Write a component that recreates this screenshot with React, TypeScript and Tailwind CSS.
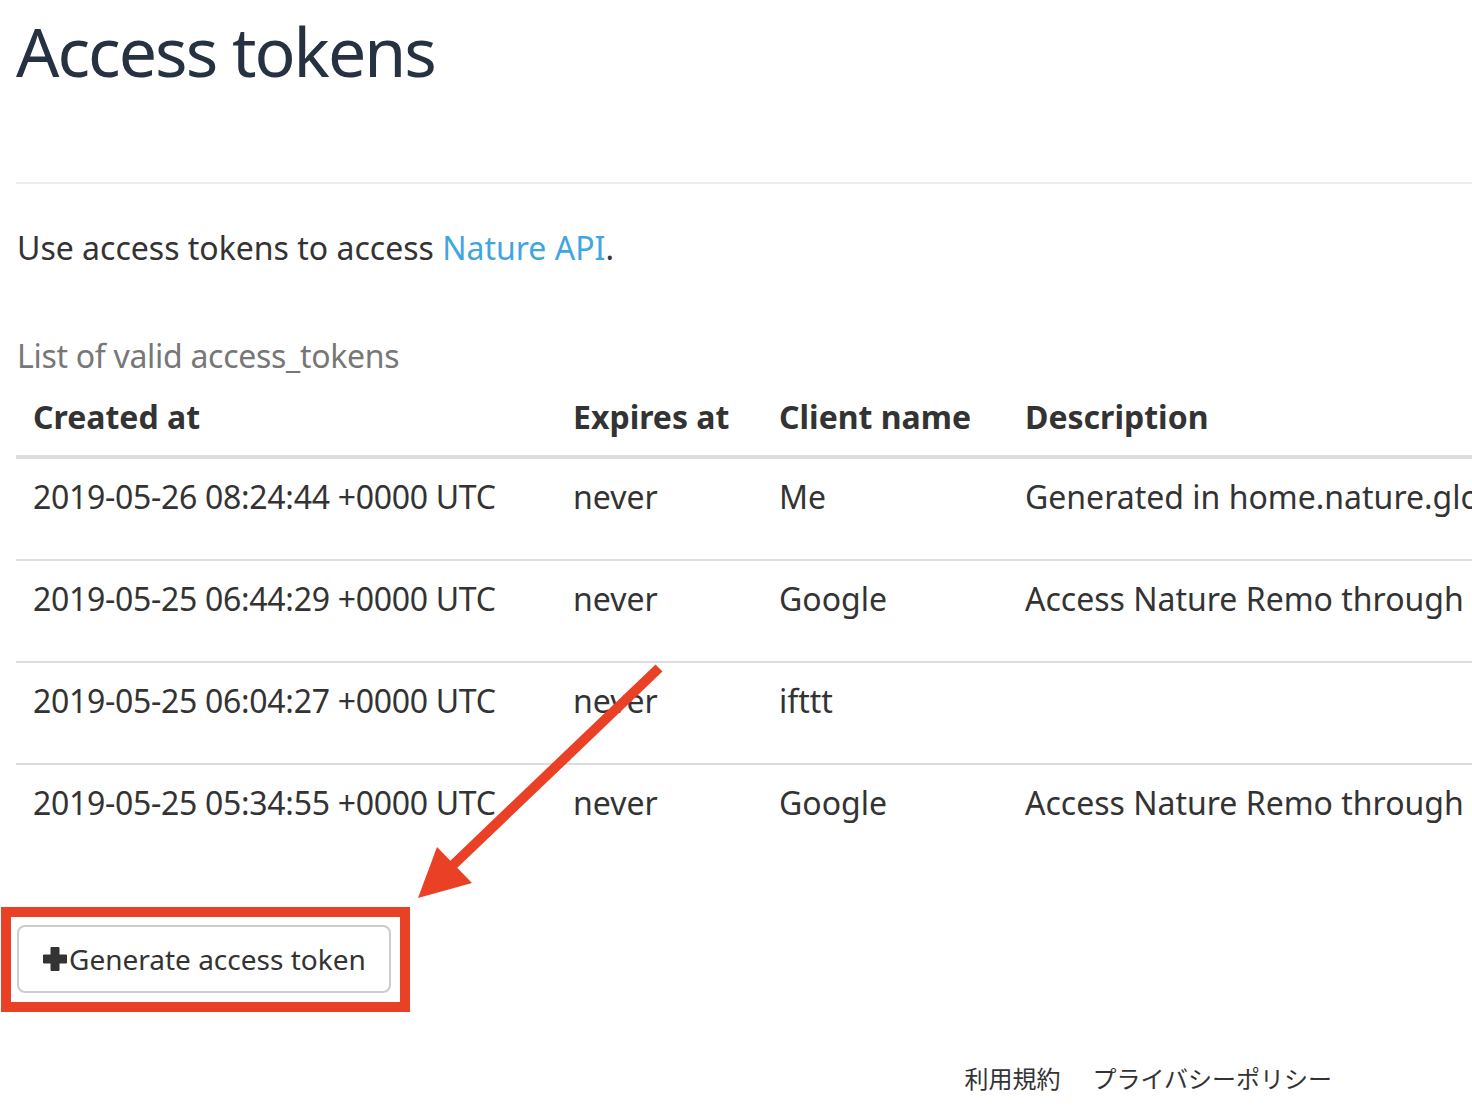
import React from 'react'

const rows = [
    { created: '2019-05-26 08:24:44 +0000 UTC', expires: 'never', client: 'Me', desc: 'Generated in home.nature.global' },
    { created: '2019-05-25 06:44:29 +0000 UTC', expires: 'never', client: 'Google', desc: 'Access Nature Remo through Google Assistant' },
    { created: '2019-05-25 06:04:27 +0000 UTC', expires: 'never', client: 'ifttt', desc: '' },
    { created: '2019-05-25 05:34:55 +0000 UTC', expires: 'never', client: 'Google', desc: 'Access Nature Remo through Google Assistant' },
]

function PlusIcon() {
    return (
        <svg width="26" height="26" viewBox="0 0 26 26" className="shrink-0">
            <path d="M9 1.5h8v7.5h7.5v8H17v7.5H9V17H1.5V9H9z" fill="#333" strokeLinejoin="round" stroke="#333" strokeWidth="1" />
        </svg>
    )
}

export default function App() {
    return (
        <div
            className="relative w-[1472px] h-[1114px] overflow-hidden bg-white text-[#333]"
            style={{ fontFamily: '"Noto Sans", "Open Sans", "Noto Sans CJK JP", sans-serif' }}
        >
            <div className="pl-4">
                <h1 className="mt-[17px] text-[68px] leading-[68px] font-normal tracking-[-2px] text-[#263241]">Access tokens</h1>
                <div className="mt-[97px] border-t-2 border-[#eee]" />

                <p className="mt-[40px] text-[32px] leading-[48px] pl-px">
                    Use access tokens to access <a className="text-[#3fa6df]">Nature API</a>.
                </p>

                <div className="mt-[64px] text-[32px] leading-[40px] text-[#777] pl-px tracking-[-0.3px]">List of valid access_tokens</div>

                <table className="table-fixed border-collapse w-[1800px] text-left whitespace-nowrap text-[32px]">
                    <colgroup>
                        <col className="w-[540px]" />
                        <col className="w-[206px]" />
                        <col className="w-[246px]" />
                        <col />
                    </colgroup>
                    <thead>
                        <tr className="border-b-4 border-[#ddd]">
                            <th className="pl-[17px] pt-[21px] pb-[18px] leading-[40px] font-bold">Created at</th>
                            <th className="pl-[17px] pt-[21px] pb-[18px] leading-[40px] font-bold">Expires at</th>
                            <th className="pl-[17px] pt-[21px] pb-[18px] leading-[40px] font-bold">Client name</th>
                            <th className="pl-[17px] pt-[21px] pb-[18px] leading-[40px] font-bold">Description</th>
                        </tr>
                    </thead>
                    <tbody>
                        {rows.map((r, i) => (
                            <tr key={i} className={i > 0 ? 'border-t-2 border-[#ddd]' : ''}>
                                <td className="pl-[17px] pt-[18px] pb-[42px] leading-[40px] align-top tracking-[-0.3px]">{r.created}</td>
                                <td className="pl-[17px] pt-[18px] pb-[42px] leading-[40px] align-top">{r.expires}</td>
                                <td className="pl-[17px] pt-[18px] pb-[42px] leading-[40px] align-top">{r.client}</td>
                                <td className="pl-[17px] pt-[18px] pb-[42px] leading-[40px] align-top">{r.desc}</td>
                            </tr>
                        ))}
                    </tbody>
                </table>
            </div>

            <div className="mt-[42px] ml-px w-[409px] border-[10px] border-[#ea4126] pl-[6px] pt-[8px] pb-[9px]">
                <button className="flex items-center h-[68px] w-[374px] border-2 border-[#ccc] rounded-[8px] bg-white pl-[23px] text-[28px] text-[#333]">
                    <PlusIcon />
                    <span className="ml-[1px]">Generate access token</span>
                </button>
            </div>

            <div className="mt-[51px] flex justify-end gap-[32px] pr-[140px] text-[24px] leading-[32px] text-[#333]">
                <a>利用規約</a>
                <a>プライバシーポリシー</a>
            </div>

            <svg className="absolute left-0 top-0 pointer-events-none" width="1472" height="1114">
                <line x1="659" y1="668" x2="452" y2="866" stroke="#ea4126" strokeWidth="10" />
                <polygon points="418,898 437,847 472,883" fill="#ea4126" />
            </svg>
        </div>
    )
}
